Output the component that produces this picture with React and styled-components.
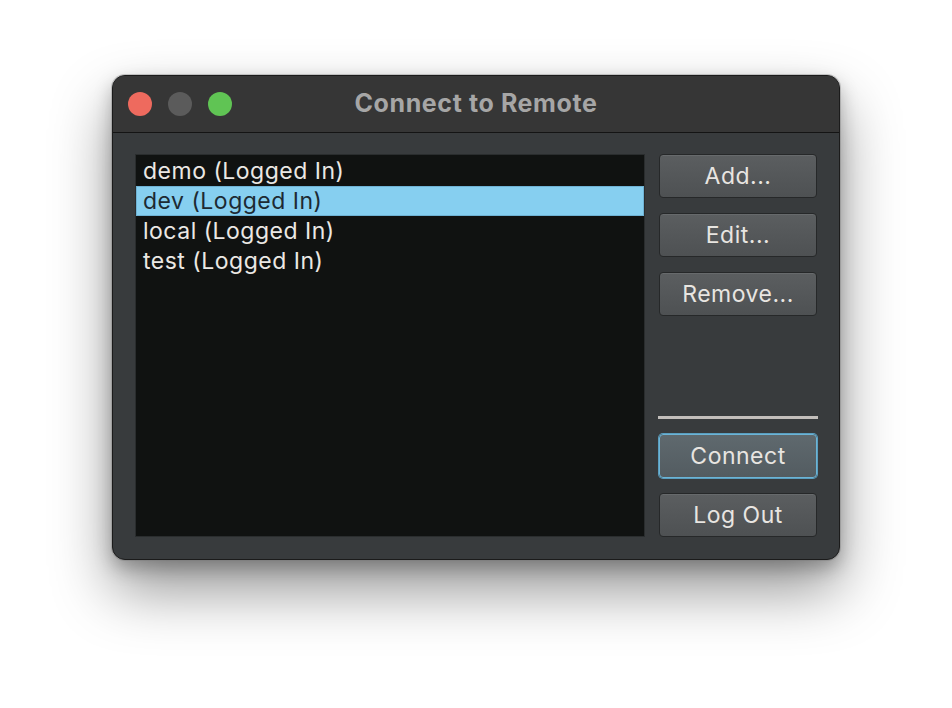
import React, { useState } from "react";
import styled, { createGlobalStyle } from "styled-components";

const GlobalStyle = createGlobalStyle`
  html, body {
    margin: 0;
    padding: 0;
    background: #ffffff;
    font-family: Inter, "Noto Sans", "DejaVu Sans", sans-serif;
  }
`;

const accounts = ["demo", "dev", "local", "test"];

const App = () => {
  const [selected, setSelected] = useState("dev");

  return (
    <>
      <GlobalStyle />
      <Stage>
        <Window>
          <TitleBar>
            <Lights>
              <Light color="#ee6a5e" />
              <Light color="#5b5b5b" />
              <Light color="#60c454" />
            </Lights>
            <Title>Connect to Remote</Title>
          </TitleBar>
          <Body>
            <List>
              {accounts.map((name) => (
                <Row
                  key={name}
                  $active={name === selected}
                  onClick={() => setSelected(name)}
                >
                  {name} (Logged In)
                </Row>
              ))}
            </List>
            <Side>
              <Button type="button">Add...</Button>
              <Button type="button">Edit...</Button>
              <Button type="button">Remove...</Button>
              <Spacer />
              <Separator />
              <Button type="button" $primary>
                Connect
              </Button>
              <Button type="button">Log Out</Button>
            </Side>
          </Body>
        </Window>
      </Stage>
    </>
  );
};

export default App;

const Stage = styled.div`
  width: 952px;
  height: 708px;
  padding: 75px 0 0 112px;
  box-sizing: border-box;
`;

const Window = styled.div`
  width: 728px;
  height: 485px;
  box-sizing: border-box;
  border-radius: 13px;
  border: 1px solid #1b1b1b;
  background: #383b3d;
  overflow: hidden;
  display: flex;
  flex-direction: column;
  box-shadow: 0 0 0 1px rgba(120, 120, 120, 0.35), 0 30px 60px rgba(0, 0, 0, 0.42),
    0 8px 18px rgba(0, 0, 0, 0.25);
`;

const TitleBar = styled.div`
  height: 56px;
  flex-shrink: 0;
  background: #363636;
  border-bottom: 1px solid #141414;
  display: flex;
  align-items: center;
  position: relative;
`;

const Lights = styled.div`
  display: flex;
  gap: 16px;
  padding-left: 15px;
`;

const Light = styled.span`
  width: 24px;
  height: 24px;
  border-radius: 50%;
  background: ${(props) => props.color};
`;

const Title = styled.div`
  position: absolute;
  left: 0;
  right: 0;
  top: 12px;
  text-align: center;
  font-size: 25px;
  letter-spacing: 0.6px;
  font-weight: 700;
  color: #a6a6a6;
  pointer-events: none;
`;

const Body = styled.div`
  flex: 1;
  display: flex;
  gap: 14px;
  padding: 21px 22px 22px 22px;
`;

const List = styled.div`
  flex: 1;
  background: #101211;
  border: 1px solid #2a2d2e;
  display: flex;
  flex-direction: column;
  padding-top: 1px;
`;

const Row = styled.div`
  height: 30px;
  box-sizing: border-box;
  line-height: 28px;
  padding: 0 6px;
  font-size: 23px;
  letter-spacing: 0.5px;
  color: ${(props) => (props.$active ? "#1d2a33" : "#ebe8e4")};
  background: ${(props) => (props.$active ? "#86cff0" : "transparent")};
  border: 1px solid ${(props) => (props.$active ? "#6fb2d4" : "transparent")};
  cursor: default;
`;

const Side = styled.div`
  width: 158px;
  display: flex;
  flex-direction: column;
  gap: 15px;
`;

const Spacer = styled.div`
  flex: 1;
`;

const Separator = styled.div`
  height: 3px;
  margin: 0 -1px 0 -1px;
  background: #c2bebb;
`;

const Button = styled.button`
  height: 44px;
  box-sizing: border-box;
  font-family: inherit;
  font-size: 23px;
  letter-spacing: 0.5px;
  color: #e8e5e1;
  border-radius: 4px;
  border: 1px solid ${(props) => (props.$primary ? "#6cb4d6" : "#262829")};
  box-shadow: ${(props) =>
    props.$primary
      ? "0 0 0 1px #5a9ebf"
      : "inset 0 1px 0 rgba(255,255,255,0.08)"};
  background: ${(props) =>
    props.$primary
      ? "linear-gradient(#5f696e, #535c61)"
      : "linear-gradient(#5b5e60, #4e5153)"};
  cursor: pointer;
  padding: 0;
`;
